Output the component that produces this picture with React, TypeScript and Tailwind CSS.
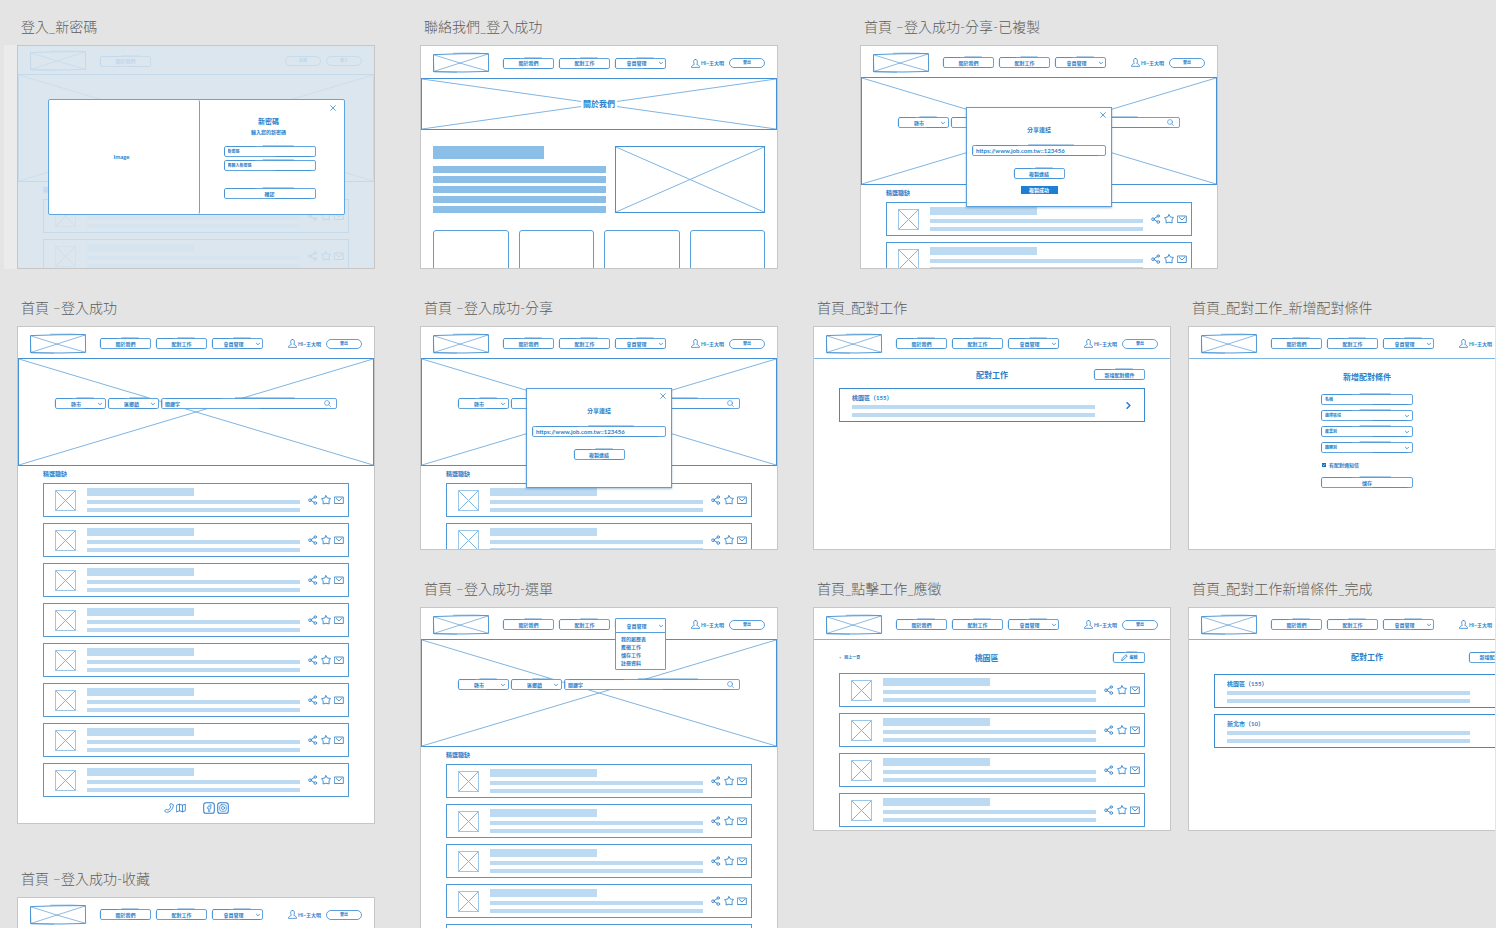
import type { ReactNode } from 'react';

const cjk = 'font-["Lato","Noto_Sans_CJK_TC",sans-serif]';

/* ---------- drawings ---------- */

function Cross({ className = '' }: { className?: string }) {
  return (
    <svg
      className={`pointer-events-none absolute inset-0 size-full ${className}`}
      viewBox="0 0 100 100"
      preserveAspectRatio="none"
      fill="none"
      stroke="currentColor"
      aria-hidden="true"
    >
      <path d="M0 0 100 100M100 0 0 100" vectorEffect="non-scaling-stroke" />
    </svg>
  );
}

function Outline() {
  return (
    <span className="pointer-events-none absolute inset-0 rounded-[2px] border border-[#62a5de]" aria-hidden="true">
      <svg
        className="absolute -inset-px h-[11px] w-[calc(100%+2px)] overflow-visible text-[#3586cd]"
        viewBox="0 0 100 20"
        preserveAspectRatio="none"
        fill="none"
        stroke="currentColor"
      >
        <path
          d="M3 1 34 1M42 -.4 76 -.2M56 19 94 19.2M.6 4 .6 16"
          vectorEffect="non-scaling-stroke"
          strokeWidth="0.6"
        />
      </svg>
    </span>
  );
}

function Logo() {
  return (
    <svg
      className="h-5 w-14 shrink-0 overflow-visible text-[#3f8dcf]"
      viewBox="0 0 56 20"
      fill="none"
      stroke="currentColor"
      role="img"
      aria-label="Logo"
    >
      <path d="M.5 1.6 27 .8 55.4 .6 55.6 18.4 30 19 .6 18.6Z" strokeWidth="0.9" />
      <path d="M.8 1.8 28 10.4 55.2 18.2M55 1 29 9.4 1 18.4" strokeWidth="0.6" />
      <path d="M20 .2 42 0 55.6 .8M.4 6 .9 18.8 24 19.4" strokeWidth="0.5" />
    </svg>
  );
}

function Svg({ className, children }: { className: string; children: ReactNode }) {
  return (
    <svg
      className={`shrink-0 ${className}`}
      viewBox="0 0 20 20"
      fill="none"
      stroke="currentColor"
      strokeWidth="1.7"
      strokeLinejoin="round"
      strokeLinecap="round"
      aria-hidden="true"
    >
      {children}
    </svg>
  );
}

const ShareIcon = () => (
  <Svg className="size-[10px]">
    <circle cx="14.5" cy="4" r="2.4" />
    <circle cx="4" cy="10.4" r="2.7" />
    <circle cx="14.5" cy="16" r="2.7" />
    <path d="M6.6 9 12.4 5.2M6.8 11.6 12 14.6" />
  </Svg>
);
const StarIcon = () => (
  <Svg className="size-[10px]">
    <path d="M10 1.4 12.8 6 18.8 6.8 16 11.6 16.4 17.8 10 16.4 4.2 18 4.2 11.8 1.2 7.2 7.2 6Z" />
  </Svg>
);
const MailIcon = () => (
  <Svg className="size-[10px]">
    <path d="M1.4 4H18.6V17H1.4ZM4.6 7 10 12 15.6 6.6" />
  </Svg>
);
const UserIcon = () => (
  <Svg className="size-[9px]">
    <path d="M10 1C6.4 1 5.6 3.8 6 7 6.2 9.6 7 11 7.4 12 4 13 1.4 15 .8 18.6H19.4C18.6 15 16.4 13 12.8 12 13.8 10.4 14.4 8.6 14.2 6.4 14 2.8 12.8 1 10 1Z" />
  </Svg>
);
const Chevron = () => (
  <Svg className="size-1">
    <path d="M2 6 10 14 18 6" strokeWidth="4" />
  </Svg>
);
const CloseIcon = () => (
  <Svg className="size-[6px]">
    <path d="M2 2 18 18M18 2 2 18" strokeWidth="2.4" />
  </Svg>
);
const SearchIcon = () => (
  <Svg className="size-[7px]">
    <circle cx="8.6" cy="8.6" r="7" />
    <path d="M14 14 18.6 18.8" />
  </Svg>
);

/* ---------- small parts ---------- */

const box = `relative flex h-[11px] items-center justify-center whitespace-nowrap text-[5px] leading-[8px] font-bold text-[#2b7fca]`;

function NavButton({ children }: { children: ReactNode }) {
  return (
    <a href="#" className={`${box} w-[51px]`}>
      <Outline />
      {children}
    </a>
  );
}

function Pill({ children }: { children: ReactNode }) {
  return (
    <button
      type="button"
      className="flex h-[10px] w-9 items-center justify-center rounded-full border border-[#5a9fdb] text-[4px] leading-[6px] font-bold"
    >
      {children}
    </button>
  );
}

function Header({
  size = 'h-[31px]',
  guest = false,
  menu = false,
}: {
  size?: string;
  guest?: boolean;
  menu?: boolean;
}) {
  return (
    <header className={`flex shrink-0 items-center px-3 pt-[2px] ${size}`}>
      <Logo />
      <nav className="ml-[14px] flex gap-[5px]">
        <NavButton>關於我們</NavButton>
        {!guest && (
          <>
            <NavButton>配對工作</NavButton>
            <div className="relative">
              <button type="button" className={`${box} w-[51px] gap-3 pl-2`}>
                <Outline />
                會員管理
                <Chevron />
              </button>
              {menu && (
                <ul className="absolute -top-px left-0 z-10 w-[51px] rounded-[1px] border border-[#5a9fdb] bg-white pb-[2px] text-[5px] leading-[8px] font-bold">
                  <li className="mb-[2px] border-b border-[#5a9fdb]">
                    <button type="button" className="flex h-[13px] w-full items-center justify-center gap-3 pl-2">
                      會員管理
                      <Chevron />
                    </button>
                  </li>
                  {['我的履歷表', '應徵工作', '儲存工作', '註冊資料'].map((t) => (
                    <li key={t} className="pl-[5px]">
                      <a href="#">{t}</a>
                    </li>
                  ))}
                </ul>
              )}
            </div>
          </>
        )}
      </nav>
      <div className="ml-auto flex items-center gap-[5px]">
        {guest ? (
          <>
            <Pill>註冊</Pill>
            <Pill>登入</Pill>
          </>
        ) : (
          <>
            <span className="flex items-center gap-px text-[5px] leading-[8px] font-bold whitespace-nowrap">
              <UserIcon />
              Hi~王大明
            </span>
            <Pill>登出</Pill>
          </>
        )}
      </div>
    </header>
  );
}

function Picker({ label }: { label: string }) {
  return (
    <div className={`${box} w-[51px] bg-white`}>
      <Outline />
      <select aria-label={label} className="h-full w-full appearance-none bg-transparent pl-4 outline-none">
        <option>{label}</option>
      </select>
      <span className="pointer-events-none absolute right-1 flex">
        <Chevron />
      </span>
    </div>
  );
}

function Hero() {
  return (
    <section className="relative h-[108px] shrink-0 border border-[#4591d2] pt-[39px] pl-9">
      <Cross className="text-[#7fb5e3]" />
      <form className="relative flex gap-[2px]">
        <Picker label="縣市" />
        <Picker label="區鄉鎮" />
        <div className={`${box} w-[176px] bg-white pr-[6px] pl-1`}>
          <Outline />
          <input
            aria-label="關鍵字"
            placeholder="關鍵字"
            className="h-full w-full bg-transparent outline-none placeholder:text-[#2b7fca]"
          />
          <SearchIcon />
        </div>
      </form>
    </section>
  );
}

function Job() {
  return (
    <li className="flex h-[34px] shrink-0 items-center gap-2 border border-[#4f98d7] pr-1 pl-[11px]">
      <div className="relative mr-[3px] size-[21px] shrink-0 border border-[#9cc6ea]">
        <Cross className="text-[#7fb5e3]" />
      </div>
      <div className="flex flex-1 flex-col gap-1">
        <div className="h-2 w-1/2 bg-[#bcdaf1]" />
        <div className="h-1 bg-[#bcdaf1]" />
        <div className="h-1 bg-[#bcdaf1]" />
      </div>
      <div className="flex gap-[3px]">
        <button type="button" aria-label="分享">
          <ShareIcon />
        </button>
        <button type="button" aria-label="收藏">
          <StarIcon />
        </button>
        <button type="button" aria-label="應徵">
          <MailIcon />
        </button>
      </div>
    </li>
  );
}

function Jobs({ count }: { count: number }) {
  return (
    <ul className="flex flex-col gap-[6px] px-[25px]">
      {Array.from({ length: count }, (_, i) => (
        <Job key={i} />
      ))}
    </ul>
  );
}

function Home({
  count,
  headerSize,
  guest,
  menu,
}: {
  count: number;
  headerSize?: string;
  guest?: boolean;
  menu?: boolean;
}) {
  return (
    <>
      <Header size={headerSize} guest={guest} menu={menu} />
      <Hero />
      <h3 className="mb-[2px] flex h-[15px] shrink-0 items-center px-[25px] text-[6px] leading-[8px] font-bold">
        精選職缺
      </h3>
      <Jobs count={count} />
    </>
  );
}

function ShareDialog({ copied = false }: { copied?: boolean }) {
  return (
    <div className="absolute inset-0 flex items-center justify-center">
      <div
        role="dialog"
        aria-label="分享連結"
        className="flex h-[100px] w-[146px] flex-col items-center border border-[#5a9fdb] bg-white px-[5px] shadow-[0_1px_2px_rgba(60,110,160,0.45)]"
      >
        <button type="button" aria-label="關閉" className="mt-1 self-end">
          <CloseIcon />
        </button>
        <h3 className="mt-2 text-[6px] leading-[8px] font-bold">分享連結</h3>
        <div className={`${box} mt-[11px] w-full px-1`}>
          <Outline />
          <input
            aria-label="連結"
            readOnly
            defaultValue="https://www.job.com.tw::123456"
            className="w-full bg-transparent text-[6px] leading-[8px] outline-none"
          />
        </div>
        <button type="button" className={`${box} mt-3 w-[51px] shrink-0`}>
          <Outline />
          複製連結
        </button>
        {copied && (
          <p className="mt-[7px] w-[37px] bg-[#1b7fd6] text-center text-[5px] leading-[8px] font-bold text-white">
            複製成功
          </p>
        )}
      </div>
    </div>
  );
}

function MatchCard({ name, count, arrow }: { name: string; count: number; arrow?: boolean }) {
  return (
    <li className="flex h-[34px] items-center border border-[#3c8bd0] px-3">
      <div className="mr-[30px] flex flex-1 flex-col gap-1">
        <h4 className="-mb-px text-[6px] leading-[8px] font-bold">
          {name}（{count}）
        </h4>
        <div className="h-1 bg-[#bcdaf1]" />
        <div className="h-1 bg-[#bcdaf1]" />
      </div>
      <Svg className={arrow ? 'size-[7px]' : 'size-[7px] opacity-0'}>
        <path d="M6 2 14 10 6 18" strokeWidth="4.5" />
      </Svg>
    </li>
  );
}

function MatchHead({ size }: { size: string }) {
  return (
    <div className={`grid grid-cols-[1fr_auto_1fr] items-center px-[25px] ${size}`}>
      <span />
      <h3 className="text-[8px] leading-[10px] font-bold">配對工作</h3>
      <button type="button" className={`${box} w-[51px] justify-self-end`}>
        <Outline />
        新增配對條件
      </button>
    </div>
  );
}

function Field({ label, pick = false }: { label: string; pick?: boolean }) {
  return (
    <div className={`${box} bg-white px-1`}>
      <Outline />
      {pick ? (
        <>
          <select aria-label={label} className="h-full w-full appearance-none bg-transparent text-[4px] outline-none">
            <option>{label}</option>
          </select>
          <Chevron />
        </>
      ) : (
        <input
          aria-label={label}
          placeholder={label}
          className="h-full w-full bg-transparent text-[4px] outline-none placeholder:text-[#2b7fca]"
        />
      )}
    </div>
  );
}

function Board({
  title,
  place,
  size = 'h-[224px]',
  tone = 'bg-white',
  children,
}: {
  title: string;
  place: string;
  size?: string;
  tone?: string;
  children: ReactNode;
}) {
  return (
    <section className={`absolute w-[358px] ${place}`}>
      <h2 className="mb-2 h-5 pl-1 text-[14px] leading-5 font-light whitespace-nowrap text-[#5c5c5c]">{title}</h2>
      <div
        className={`relative flex flex-col overflow-hidden border border-[#c6c6c6] text-[#2b7fca] ${size} ${tone}`}
      >
        {children}
      </div>
    </section>
  );
}

/* ---------- boards ---------- */

function NewPassword() {
  return (
    <Board title="登入_新密碼" place="left-[17px] top-[17px]" tone="bg-[#dbe6ef]">
      <div className="flex flex-col opacity-15">
        <Home count={2} headerSize="h-7" guest />
      </div>
      <div className="absolute inset-0 flex items-center justify-center">
        <div
          role="dialog"
          aria-label="新密碼"
          className="flex h-[116px] w-[297px] rounded-[2px] border border-[#5fa5e0] bg-white"
        >
          <div className="flex w-[151px] items-center justify-center rounded-r-[2px] border-r border-[#5fa5e0] pr-1 text-[6px] leading-[8px] font-bold">
            Image
          </div>
          <form className="relative flex flex-1 flex-col items-center">
            <button type="button" aria-label="關閉" className="mt-[5px] mr-2 self-end">
              <CloseIcon />
            </button>
            <h3 className="mt-[6px] mr-[6px] text-[7px] leading-[8px] font-bold">新密碼</h3>
            <p className="mt-1 mr-[6px] text-[5px] leading-[6px] font-bold">輸入您的新密碼</p>
            <div className="mt-[11px] mr-1 flex w-[92px] flex-col gap-[3px]">
              <Field label="新密碼" />
              <Field label="再輸入新密碼" />
              <button type="submit" className={`${box} mt-[14px]`}>
                <Outline />
                確認
              </button>
            </div>
          </form>
        </div>
      </div>
    </Board>
  );
}

function About() {
  return (
    <Board title="聯絡我們_登入成功" place="left-[420px] top-[17px]">
      <Header size="h-8" />
      <div className="relative flex h-[52px] shrink-0 items-center justify-center border border-[#4591d2]">
        <Cross className="text-[#7fb5e3]" />
        <h3 className="relative bg-white px-[2px] text-[8px] leading-[10px] font-bold">關於我們</h3>
      </div>
      <div className="mt-4 flex gap-[9px] px-3">
        <div className="flex flex-1 flex-col gap-[3px]">
          <div className="mb-1 h-[13px] w-[111px] bg-[#8bbfe8]" />
          {[0, 1, 2, 3, 4].map((i) => (
            <div key={i} className="h-[7px] bg-[#8bbfe8]" />
          ))}
        </div>
        <div className="relative h-[67px] w-[150px] border border-[#4591d2]">
          <Cross className="text-[#7fb5e3]" />
        </div>
      </div>
      <div className="mt-[17px] grid grid-cols-4 gap-[10px] px-3">
        {[0, 1, 2, 3].map((i) => (
          <div key={i} className="h-20 rounded-[3px] border border-[#5a9fdb]" />
        ))}
      </div>
    </Board>
  );
}

function Footer() {
  return (
    <footer className="mt-[5px] flex items-center justify-center gap-[17px]">
      <div className="flex items-center gap-[2px]">
        <Svg className="size-[10px]">
          <path d="M14 1.4 18.6 3.4C19 9 15 16.6 7 18.6 4.6 19 2 17.6 1.2 15.4L5 12.8 8 14.2C10.6 13 12.6 10.6 13.4 7.6L11.8 5Z" />
        </Svg>
        <Svg className="size-[10px]">
          <path d="M1.4 4.4 7 2.4 13 4.4 18.6 2.4V15.6L13 17.6 7 15.6 1.4 17.6ZM7 2.4V15.6M13 4.4V17.6" />
        </Svg>
      </div>
      <div className="flex items-center gap-[2px]">
        <Svg className="size-3">
          <rect x="1.2" y="1.2" width="17.6" height="17.6" rx="4" />
          <path d="M13 4.6C9.6 4.2 9.4 6 9.4 8.4H7.2V11H9.2V16H11.4V11H13L13.4 8.4H11.4C11.2 7 11.6 6.6 13 6.8Z" strokeWidth="1.1" />
        </Svg>
        <Svg className="size-3">
          <rect x="1.2" y="1.2" width="17.6" height="17.6" rx="4" />
          <rect x="4.6" y="4.6" width="10.8" height="10.8" rx="3" strokeWidth="1.2" />
          <circle cx="10" cy="10" r="2.6" strokeWidth="1.2" />
        </Svg>
      </div>
    </footer>
  );
}

export default function App() {
  return (
    <div className="min-h-screen bg-[#e4e4e4]">
      <main className={`relative mr-px h-screen overflow-hidden ${cjk}`} lang="zh-Hant">
        <div className="absolute top-[45px] left-1 h-[224px] w-[13px] bg-[#ebebeb]" />
        <NewPassword />
        <About />
        <Board title="首頁 –登入成功-分享-已複製" place="left-[860px] top-[17px]">
          <Home count={2} />
          <ShareDialog copied />
        </Board>

        <Board title="首頁 –登入成功" place="left-[17px] top-[298px]" size="h-[498px]">
          <Home count={8} />
          <Footer />
        </Board>
        <Board title="首頁 –登入成功-分享" place="left-[420px] top-[298px]">
          <Home count={2} />
          <ShareDialog />
        </Board>
        <Board title="首頁_配對工作" place="left-[813px] top-[298px]">
          <Header size="h-8 border-b border-[#7fb5e3]" />
          <MatchHead size="h-[29px] pt-[2px]" />
          <ul className="px-[25px]">
            <MatchCard name="桃園區" count={155} arrow />
          </ul>
        </Board>
        <Board title="首頁_配對工作_新增配對條件" place="left-[1188px] top-[298px]">
          <Header size="h-8 border-b border-[#7fb5e3]" />
          <form className="mt-[13px] flex flex-col items-center">
            <h3 className="text-[8px] leading-[10px] font-bold">新增配對條件</h3>
            <div className="mt-3 flex w-[92px] flex-col gap-[5px]">
              <Field label="名稱" />
              <Field label="選擇區域" pick />
              <Field label="產業別" pick />
              <Field label="職務別" pick />
              <label className="my-[3px] flex items-center gap-[3px] text-[5px] leading-[8px] font-bold">
                <span className="relative ml-px flex size-1">
                  <input type="checkbox" defaultChecked className="size-1 appearance-none bg-[#1b6fb8]" />
                  <Svg className="pointer-events-none absolute size-1 text-white">
                    <path d="M5 10 9 14 15 6" strokeWidth="3" />
                  </Svg>
                </span>
                有配對通知信
              </label>
              <button type="submit" className={box}>
                <Outline />
                儲存
              </button>
            </div>
          </form>
        </Board>

        <Board title="首頁 –登入成功-選單" place="left-[420px] top-[579px]" size="h-[498px]">
          <Home count={8} menu />
          <Footer />
        </Board>
        <Board title="首頁_點擊工作_應徵" place="left-[813px] top-[579px]">
          <Header size="h-8 border-b border-[#7fb5e3]" />
          <div className="flex h-[33px] shrink-0 items-center justify-between px-[25px] pt-[2px]">
            <a href="#" className="text-[4px] leading-[6px] font-bold">
              &lt;&nbsp;&nbsp; 回上一頁
            </a>
            <h3 className="text-[8px] leading-[10px] font-bold">桃園區</h3>
            <button type="button" className={`${box} w-8 gap-[2px]`}>
              <Outline />
              <Svg className="size-[7px]">
                <path d="M2 18 3.4 13 14 2 18 5.6 7 16.6Z" strokeWidth="2.4" />
              </Svg>
              <span className="text-[4px]">編輯</span>
            </button>
          </div>
          <Jobs count={4} />
        </Board>
        <Board title="首頁_配對工作新增條件_完成" place="left-[1188px] top-[579px]">
          <Header size="h-8 border-b border-[#7fb5e3]" />
          <MatchHead size="h-[34px]" />
          <ul className="flex flex-col gap-[6px] px-[25px]">
            <MatchCard name="桃園區" count={155} />
            <MatchCard name="新北市" count={10} />
          </ul>
        </Board>

        <Board title="首頁 –登入成功-收藏" place="left-[17px] top-[869px]" size="h-[498px]">
          <Home count={8} />
        </Board>
      </main>
    </div>
  );
}
